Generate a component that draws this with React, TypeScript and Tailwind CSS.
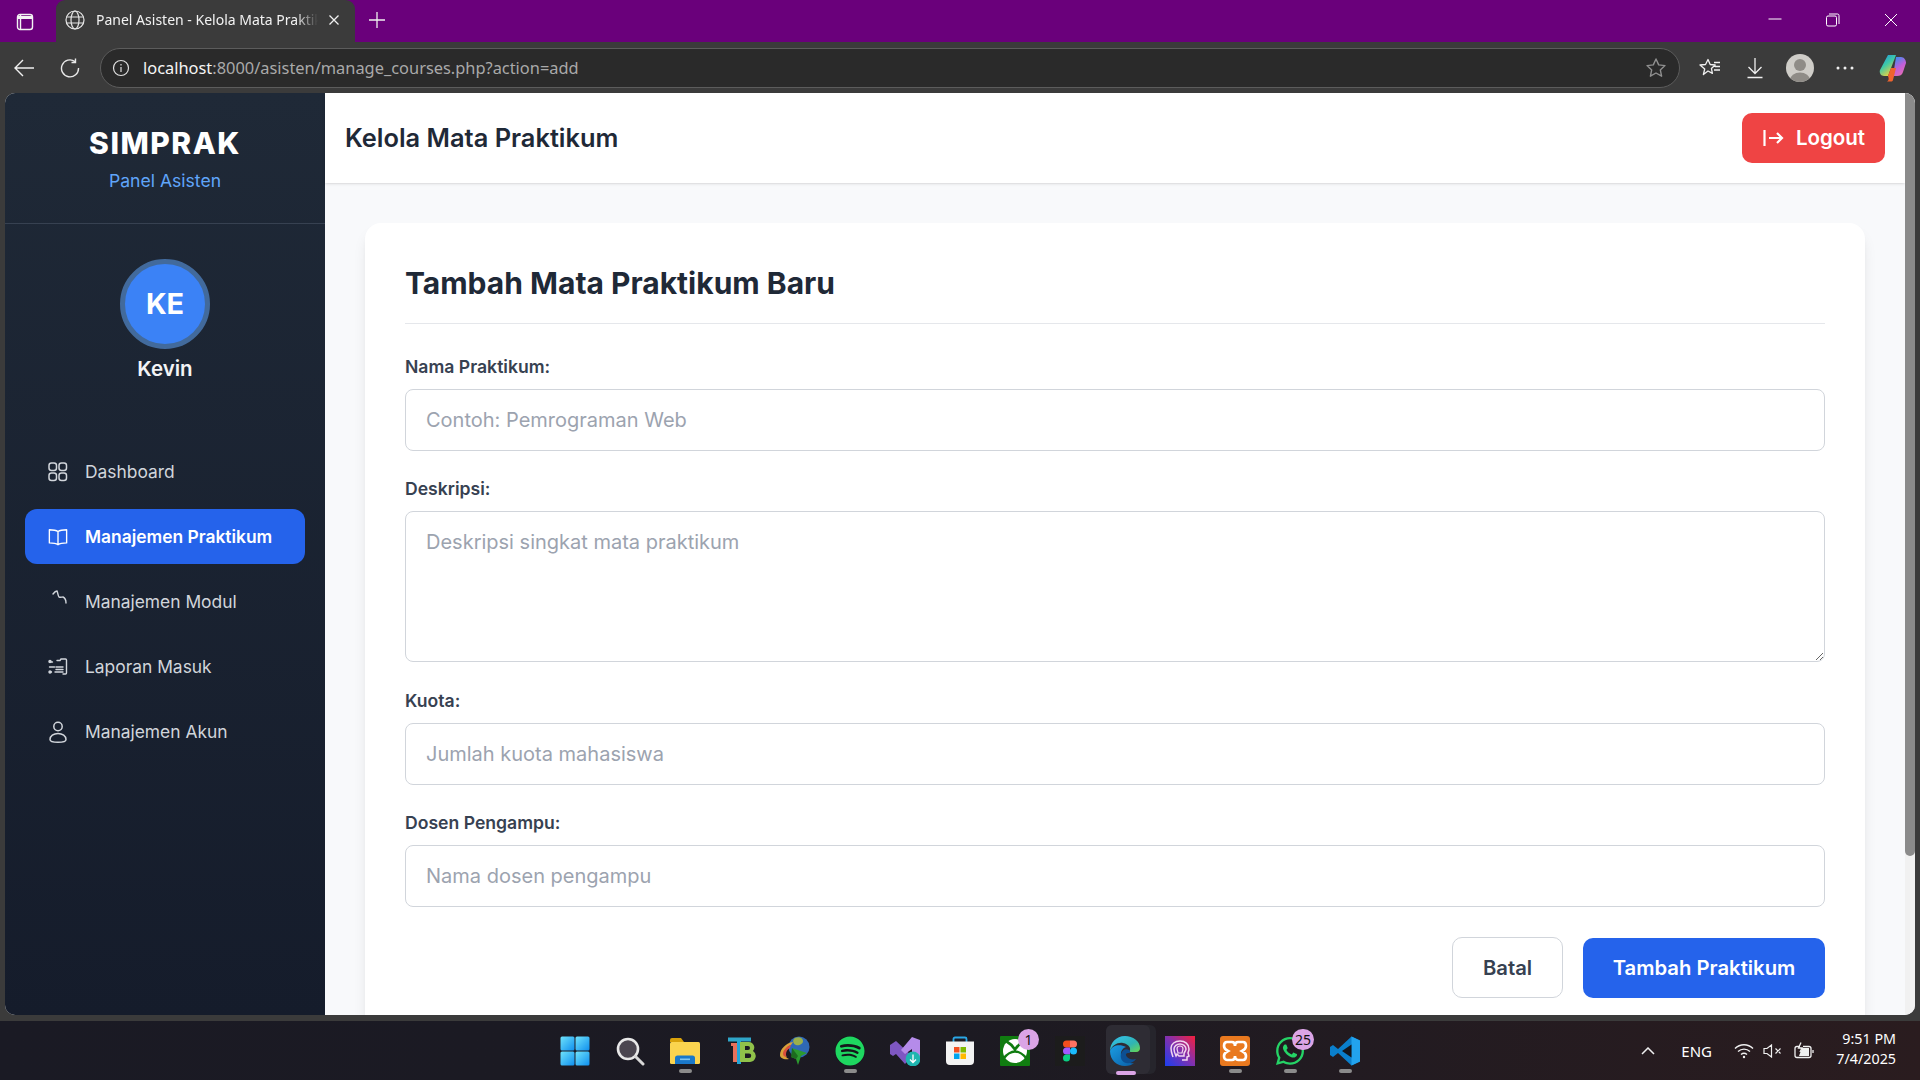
import { FaSpotify, FaWhatsapp } from "react-icons/fa";

const Windows = () => (
  <svg width="30" height="30" viewBox="0 0 30 30">
    <defs>
      <linearGradient id="win" x1="0" y1="0" x2="1" y2="1">
        <stop offset="0" stopColor="#6fe3fb" />
        <stop offset="1" stopColor="#0f8fee" />
      </linearGradient>
    </defs>
    <rect x="0.5" y="0.5" width="14" height="14" rx="1.5" fill="url(#win)" />
    <rect x="15.5" y="0.5" width="14" height="14" rx="1.5" fill="url(#win)" />
    <rect x="0.5" y="15.5" width="14" height="14" rx="1.5" fill="url(#win)" />
    <rect x="15.5" y="15.5" width="14" height="14" rx="1.5" fill="url(#win)" />
  </svg>
);

const Search = () => (
  <svg width="30" height="30" viewBox="0 0 30 30" fill="none">
    <circle cx="13" cy="13" r="10" fill="#4b4650" stroke="#e8e8e8" strokeWidth="2.6" />
    <path d="M20.5 20.5 28 28" stroke="#d8d8d8" strokeWidth="3" strokeLinecap="round" />
  </svg>
);

const Explorer = () => (
  <svg width="30" height="28" viewBox="0 0 30 28">
    <path d="M0 3a2 2 0 0 1 2-2h9l3 4h-14z" fill="#d9a20b" />
    <rect x="0" y="5" width="30" height="22" rx="1.5" fill="#fbd44f" />
    <path d="M5 27v-6a2.5 2.5 0 0 1 2.5-2.5h15a2.5 2.5 0 0 1 2.5 2.5v6z" fill="#1a78c9" />
    <rect x="10" y="21.5" width="10" height="1.6" fill="#7fc4f0" />
  </svg>
);

const TbIcon = () => (
  <svg className="translate-x-[2px]" width="28" height="28" viewBox="0 0 28 28">
    <rect x="0" y="0.500" width="23" height="4" fill="#2fa6c9" />
    <rect x="3" y="6" width="8" height="3" fill="#e8705a" />
    <rect x="5" y="6" width="4" height="19" fill="#e8705a" />
    <rect x="9" y="4" width="4" height="23" fill="#22a5d8" />
    <path d="M12 5h9a5.500 5.500 0 0 1 4 9 6 6 0 0 1-3 11H12zM17 9v4h3a2 2 0 0 0 0-4zM17 16.500V21h4a2.200 2.200 0 0 0 0-4.500z" fill="#90c24a" fillRule="evenodd" />
  </svg>
);

const Idm = () => (
  <svg width="30" height="30" viewBox="0 0 30 30">
    <circle cx="19" cy="11" r="10.500" fill="#2f68b5" />
    <path d="M15 2c4-2 8 0 8 3s-4 5-7 4-4-5-1-7z" fill="#9bb04b" />
    <path d="M0 19C0 13 6 7 13 6l-2 3c-4 1-6 5-6 8 0 3 1 5 4 6-5 1-9-1-9-4z" fill="#d8a13a" />
    <path d="M3 18c0-4 4-8 8-9l-1 3c-2 1-4 3-4 6 0 1 0 2 1 3-2 0-4-1-4-3z" fill="#d94f3c" />
    <path d="M12 12 27 17l-6 3-3 9-2-6-5-2 4-2z" fill="#2c9b2f" />
    <path d="M12 12l6 8-2 3-5-2z" fill="#1d6b1f" />
  </svg>
);

const VsIcon = () => (
  <svg width="30" height="30" viewBox="0 0 30 30">
    <path d="M0 9 6 5l16 15-7 8-9-10-3 2-3-2z" fill="#7e57c2" />
    <path d="M30 4v19l-8 4V13l-7 5-4-4L22 1z" fill="#b58bea" />
    <circle cx="23" cy="23" r="7.400" fill="#1fb5b0" />
    <path d="M23 18.500v8M20 23.500l3 3 3-3" stroke="#fff" strokeWidth="1.300" fill="none" />
  </svg>
);

const Store = () => (
  <svg width="30" height="30" viewBox="0 0 30 30">
    <path d="M8.500 8V3A1.500 1.500 0 0 1 10 1.500h10A1.500 1.500 0 0 1 21.500 3v5" fill="none" stroke="#2aa7e6" strokeWidth="1.800" />
    <path d="M1 5.500h28V25a4 4 0 0 1-4 4H5a4 4 0 0 1-4-4z" fill="#f3f3f3" />
    <rect x="9" y="11" width="5.500" height="5.500" fill="#f25022" />
    <rect x="15.500" y="11" width="5.500" height="5.500" fill="#7fba00" />
    <rect x="9" y="17.500" width="5.500" height="5.500" fill="#00a4ef" />
    <rect x="15.500" y="17.500" width="5.500" height="5.500" fill="#ffb900" />
  </svg>
);

const Xbox = () => (
  <svg width="30" height="30" viewBox="0 0 30 30">
    <rect width="30" height="30" rx="1" fill="#107c10" />
    <circle cx="15" cy="15" r="12" fill="#fff" />
    <path d="M6 5C9.500 7 13 10.500 15 13.500 17 10.500 20.500 7 24 5M3.500 22.500C6.500 18.500 11.500 15.500 15 15.500S23.500 18.500 26.500 22.500" fill="none" stroke="#107c10" strokeWidth="2.600" />
  </svg>
);

const Figma = () => (
  <span className="w-[30px] h-[30px] bg-[#1c1c1c] flex items-center justify-center">
    <svg width="14" height="22" viewBox="0 0 14 21">
      <path d="M3.500 0H7v7H3.500a3.500 3.500 0 0 1 0-7z" fill="#f24e1e" />
      <path d="M7 0h3.500a3.500 3.500 0 0 1 0 7H7z" fill="#ff7262" />
      <path d="M3.500 7H7v7H3.500a3.500 3.500 0 0 1 0-7z" fill="#a259ff" />
      <circle cx="10.500" cy="10.500" r="3.500" fill="#1abcfe" />
      <path d="M3.500 14H7v3.500a3.500 3.500 0 1 1-3.500-3.500z" fill="#0acf83" />
    </svg>
  </span>
);

const Edge = () => (
  <svg width="30" height="30" viewBox="0 0 30 30">
    <defs>
      <linearGradient id="edgeA" x1="0" y1="0" x2="1" y2="1">
        <stop offset="0" stopColor="#35c1f1" />
        <stop offset="0.6" stopColor="#2fb4b4" />
        <stop offset="1" stopColor="#6bd84f" />
      </linearGradient>
      <linearGradient id="edgeB" x1="0" y1="0" x2="1" y2="1">
        <stop offset="0" stopColor="#1b9de2" />
        <stop offset="1" stopColor="#0a5fa8" />
      </linearGradient>
    </defs>
    <path d="M15 0C6 0 0 7 0 15c2-6 8-9 13-8 6 1 9 6 6 9h7c3 0 4-2 4-4C30 5 23 0 15 0z" fill="url(#edgeA)" />
    <path d="M0 15c0 9 7 15 15 15 4 0 7-1 9-3-6 1-12-2-13-8-.6-4 2-7 5-8C10 8 2 9 0 15z" fill="url(#edgeB)" />
    <path d="M11 18c1-4 5-6 8-4 2 1 1 3 0 3-3 0-4 1-2 4 2 2 5 3 9 2-2 3-6 5-10 4-4-1-6-5-5-9z" fill="#0c4f93" />
  </svg>
);

const Proton = () => (
  <svg width="30" height="30" viewBox="0 0 30 30">
    <defs>
      <linearGradient id="pro" x1="0" y1="1" x2="1" y2="0">
        <stop offset="0" stopColor="#1a3ff0" />
        <stop offset="0.55" stopColor="#8a2fa8" />
        <stop offset="1" stopColor="#f5203c" />
      </linearGradient>
    </defs>
    <rect width="30" height="30" fill="url(#pro)" />
    <path d="M8 21c-1-3-2-5-2-9 0-4 4-7 9-7s9 3 9 8c0 2-1 3-1 4l1 3-2 1v3h-5M11 20c-1-2-2-5-2-7 0-3 3-5 6-5s6 2 6 5c0 2-2 3-2 5v2h-5l-2-2z" fill="none" stroke="#f2d6f0" strokeWidth="1.500" />
    <path d="M12 13c0-2 1-3 3-3s3 1 3 3l-1 4h-4z" fill="none" stroke="#f2d6f0" strokeWidth="1.200" />
  </svg>
);

const Xampp = () => (
  <svg width="30" height="30" viewBox="0 0 30 30">
    <rect width="30" height="30" rx="3" fill="#e9791f" />
    <path d="M7 6h5c2 0 3 2 3 4 0-2 1-4 3-4h5c2 0 3 2 3 4s-2 4-4 5c2 1 4 3 4 5s-1 4-3 4h-5c-2 0-3-2-3-4 0 2-1 4-3 4H7c-2 0-3-2-3-4s2-4 4-5c-2-1-4-3-4-5s1-4 3-4z" fill="none" stroke="#fff" strokeWidth="2.600" />
  </svg>
);

const VsCode = () => (
  <svg width="30" height="30" viewBox="0 0 30 30">
    <path d="M21.500 0.500 30 4.500v21l-8.500 4L8 17l-5 4-3-2v-8l3-2 5 4z" fill="#0a7fcc" />
    <path d="M21.500 0.500 30 4.500v21l-8.500 4z" fill="#22a3ee" />
    <path d="M21.500 8.500v13L12 15z" fill="#15161c" />
  </svg>
);

const Copilot = () => (
  <svg width="28" height="28" viewBox="0 0 28 28">
    <defs>
      <linearGradient id="copA" x1="0" y1="0" x2="0.6" y2="1">
        <stop offset="0" stopColor="#1d8fe8" />
        <stop offset="0.5" stopColor="#3ec9a7" />
        <stop offset="1" stopColor="#f3d23a" />
      </linearGradient>
      <linearGradient id="copB" x1="0.3" y1="0" x2="0.8" y2="1">
        <stop offset="0" stopColor="#3f8df0" />
        <stop offset="0.5" stopColor="#c35fd9" />
        <stop offset="1" stopColor="#e96fb0" />
      </linearGradient>
    </defs>
    <path d="M9 1h8L9 22H5C2 22 0 19 1 16z" fill="url(#copA)" />
    <path d="M17 3h5c3 0 5 3 5 6l-3 9c-1 3-3 4-6 4h-4z" fill="url(#copB)" />
    <path d="M9 22l3-8h5l-3 12c-.3 1-1 1.500-2 1.500H8c2-1 2-3 1-5.500z" fill="#f0642e" />
  </svg>
);

const DashboardIcon = () => (
  <svg width="20" height="20" viewBox="0 0 20 20" fill="none" stroke="currentColor" strokeWidth="1.500">
    <rect x="1" y="1" width="7.500" height="7.500" rx="2.500" />
    <rect x="11" y="1" width="7.500" height="7.500" rx="2.500" />
    <rect x="1" y="11" width="7.500" height="7.500" rx="2.500" />
    <rect x="11" y="11" width="7.500" height="7.500" rx="2.500" />
  </svg>
);

const BookIcon = () => (
  <svg width="22" height="20" viewBox="0 0 22 20" fill="none" stroke="currentColor" strokeWidth="1.500" strokeLinejoin="round">
    <path d="M11 4C9 2.500 5.500 2 1.500 2v14.500c4 0 7.500.5 9.500 2 2-1.500 5.500-2 9.500-2V2C16.500 2 13 2.500 11 4zM11 4v14.500" />
  </svg>
);

const ModulIcon = () => (
  <svg className="overflow-visible" width="20" height="20" viewBox="0 0 20 20" fill="none" stroke="currentColor" strokeWidth="1.400" strokeLinecap="round">
    <path d="M5 2C6.500 0 8-1 9-1c1 2 1 5 2 6 1.500.5 3 0 4 0 2 1 3 3 3 6" />
  </svg>
);

const LaporanIcon = () => (
  <svg width="20" height="20" viewBox="0 0 20 20" fill="none" stroke="currentColor" strokeWidth="1.400" strokeLinecap="round">
    <path d="M1.500 5h3M1.500 10h5M1.500 15h2M8 10h7M8 12.500h7M7 15h8M9 3.500h3l1-1.500h4.500a1 1 0 0 1 1 1v13a1 1 0 0 1-1 1H15" />
    <circle cx="2" cy="4.500" r="1" fill="currentColor" />
    <circle cx="2" cy="15" r="1" fill="currentColor" />
  </svg>
);

const PersonIcon = () => (
  <svg width="20" height="24" viewBox="0 0 20 24" fill="none" stroke="currentColor" strokeWidth="1.500">
    <circle cx="10" cy="6.500" r="4.200" />
    <path d="M2 19.500c0-3.500 3.500-6 8-6s8 2.500 8 6c0 2-3.500 2.800-8 2.800s-8-.8-8-2.800z" />
  </svg>
);

type Row = { label: string; icon: React.ReactNode; active?: boolean };

const navRows: Row[] = [
  { label: "Dashboard", icon: <DashboardIcon /> },
  { label: "Manajemen Praktikum", icon: <BookIcon />, active: true },
  { label: "Manajemen Modul", icon: <ModulIcon /> },
  { label: "Laporan Masuk", icon: <LaporanIcon /> },
  { label: "Manajemen Akun", icon: <PersonIcon /> },
];

const TaskIcon = ({ children, run, badge }: { children: React.ReactNode; run?: boolean; badge?: string }) => (
  <div className="w-[55px] h-full flex items-center justify-center relative">
    <div className="relative flex items-center justify-center w-[30px] h-[30px]">
      {children}
      {badge && (
        <span className="absolute -top-[7px] -right-[9px] h-[21px] min-w-[21px] px-[3px] rounded-full bg-[#dba4e6] text-[#111] text-[14px] leading-[21px] text-center">
          {badge}
        </span>
      )}
    </div>
    {run && <span className="absolute left-[21px] bottom-[7px] w-[13px] h-[4px] rounded-full bg-[#8b8b8b]" />}
  </div>
);

const Field = ({ label, placeholder }: { label: string; placeholder: string }) => (
  <div className="mb-[25.400px]">
    <label className="block text-[17.600px] leading-[25px] font-semibold text-[#374151] mb-[10px]">{label}</label>
    <input
      type="text"
      placeholder={placeholder}
      className="block w-full h-[62px] px-[20px] border border-[#d1d5db] rounded-[8px] text-[20px] outline-none placeholder:text-[#9ca3af]"
    />
  </div>
);

export default function App() {
  return (
    <div className="w-screen h-screen overflow-hidden flex flex-col bg-[#3b3b3b] font-['Inter',sans-serif]">
      {/* title bar */}
      <div className="h-[42px] shrink-0 bg-[#6a007b] flex items-end text-white font-['Noto_Sans',sans-serif]">
        <div className="w-[50px] mr-[6px] h-[40px] flex items-center justify-center">
          <svg width="18" height="18" viewBox="0 0 18 18" fill="none" stroke="#f2f2f2" strokeWidth="1.400">
            <rect x="1.500" y="1.500" width="15" height="15" rx="2.500" />
            <path d="M2 4.500h14" strokeWidth="3" />
            <path d="M4.500 2v14" />
          </svg>
        </div>
        <div className="w-[299px] h-[42px] bg-[#3b3b3b] rounded-t-[9px] flex items-center pl-[9px] pr-[12px] pb-[2px]">
          <svg width="20" height="20" viewBox="0 0 20 20" fill="none" stroke="#e6e6e6" strokeWidth="1.200">
            <circle cx="10" cy="10" r="9" />
            <ellipse cx="10" cy="10" rx="4" ry="9" />
            <path d="M1.500 7h17M1.500 13h17" />
          </svg>
          <span className="ml-[11px] w-[222px] overflow-hidden whitespace-nowrap text-[14px] leading-[20px] text-[#f2f2f2] [mask-image:linear-gradient(to_right,black_90%,transparent)]">
            Panel Asisten - Kelola Mata Praktikum
          </span>
          <svg className="ml-[10px]" width="12" height="12" viewBox="0 0 12 12" stroke="#f0f0f0" strokeWidth="1.300">
            <path d="M1.500 1.500l9 9M10.500 1.500l-9 9" />
          </svg>
        </div>
        <div className="w-[44px] h-[42px] flex items-center justify-center pb-[2px]">
          <svg width="18" height="18" viewBox="0 0 18 18" stroke="#f0f0f0" strokeWidth="1.300">
            <path d="M9 1v16M1 9h16" />
          </svg>
        </div>
        <div className="flex-1" />
        <div className="flex h-[42px] items-center pb-[2px]">
          <div className="w-[58px] flex justify-center">
            <svg width="14" height="14" viewBox="0 0 14 14" stroke="#fff" strokeWidth="1">
              <path d="M0.500 6h13" />
            </svg>
          </div>
          <div className="w-[58px] flex justify-center">
            <svg width="14" height="14" viewBox="0 0 14 14" fill="none" stroke="#fff" strokeWidth="1">
              <rect x="0.500" y="3" width="10" height="10" rx="1.500" />
              <path d="M3 1h8.500a1.500 1.500 0 0 1 1.500 1.500V11" />
            </svg>
          </div>
          <div className="w-[58px] flex justify-center">
            <svg width="14" height="14" viewBox="0 0 14 14" stroke="#fff" strokeWidth="1">
              <path d="M1 1l12 12M13 1L1 13" />
            </svg>
          </div>
        </div>
      </div>

      {/* toolbar */}
      <div className="h-[51px] shrink-0 flex items-center bg-[#3b3b3b]">
        <div className="w-[48px] shrink-0 flex justify-center">
          <svg width="22" height="20" viewBox="0 0 22 20" fill="none" stroke="#f0f0f0" strokeWidth="1.400">
            <path d="M21 10H2M10 2l-8 8 8 8" />
          </svg>
        </div>
        <div className="w-[44px] shrink-0 flex justify-center">
          <svg width="20" height="20" viewBox="0 0 20 20" fill="none" stroke="#e8e8e8" strokeWidth="1.400">
            <path d="M15 3.500A8.500 8.500 0 1 0 18.500 10M15.500 0.500v4h-4" />
          </svg>
        </div>
        <div className="ml-[8px] w-[1580px] shrink-0 h-[40px] rounded-full bg-[#2a2a2a] border border-[#5c5c5c] flex items-center pl-[9px] pr-[12px] font-['Noto_Sans',sans-serif]">
          <div className="w-[21px] h-[21px] flex items-center justify-center">
            <svg width="18" height="18" viewBox="0 0 18 18" fill="none" stroke="#e0e0e0" strokeWidth="1.200">
              <circle cx="9" cy="9" r="7.500" />
              <path d="M9 8v5M9 5v1.500" />
            </svg>
          </div>
          <span className="ml-[12px] text-[16.400px] leading-[22px] text-[#f5f5f5]">localhost</span>
          <span className="text-[16.400px] leading-[22px] text-[#a9a9a9]">:8000/asisten/manage_courses.php?action=add</span>
          <div className="flex-1" />
          <svg width="22" height="22" viewBox="0 0 22 22" fill="none" stroke="#8f8f8f" strokeWidth="1.400" strokeLinejoin="round">
            <path d="M11 2l2.700 5.900 6.300.7-4.700 4.300 1.300 6.300L11 16l-5.600 3.200 1.300-6.300L2 8.600l6.300-.7z" />
          </svg>
        </div>
        <div className="w-[60px] shrink-0 flex justify-center">
          <svg width="22" height="20" viewBox="0 0 22 20" fill="none" stroke="#f0f0f0" strokeWidth="1.300" strokeLinejoin="round">
            <path d="M9 1.500l2.200 5 5 .5-3.800 3.400 1 5L9 13l-4.600 3.500 1.300-5.500L1 7l5.500-.5zM15 4.500h6M16 8.500h5M15 12h6" />
          </svg>
        </div>
        <div className="w-[30px] shrink-0 flex justify-center">
          <svg width="18" height="22" viewBox="0 0 18 22" fill="none" stroke="#f0f0f0" strokeWidth="1.300">
            <path d="M9 1v15M2.500 10l6.500 6.500 6.500-6.500M1.500 20.500h15" />
          </svg>
        </div>
        <div className="w-[60px] shrink-0 flex justify-center">
          <span className="w-[28px] h-[28px] rounded-full bg-[#cfcdc8] overflow-hidden flex items-center justify-center">
            <svg width="28" height="28" viewBox="0 0 28 28" fill="#8f8c87">
              <circle cx="14" cy="11" r="6" />
              <ellipse cx="14" cy="26" rx="10" ry="7.500" />
            </svg>
          </span>
        </div>
        <div className="w-[30px] shrink-0 flex justify-center">
          <svg width="18" height="4" viewBox="0 0 18 4" fill="#f0f0f0">
            <circle cx="2" cy="2" r="1.500" />
            <circle cx="9" cy="2" r="1.500" />
            <circle cx="16" cy="2" r="1.500" />
          </svg>
        </div>
        <div className="flex-1 flex justify-end pr-[13px]">
          <Copilot />
        </div>
      </div>

      {/* page */}
      <div className="h-[922px] shrink-0 mx-[5px] rounded-[10px] overflow-hidden flex bg-[#f8f9fb]">
        <aside className="w-[320px] shrink-0 bg-gradient-to-b from-[#1f2937] to-[#151c2b]">
          <div className="h-[131px] border-b border-[#374151] flex flex-col items-center pt-[32px]">
            <div className="text-[30px] leading-[36px] font-extrabold tracking-[1.500px] text-white">SIMPRAK</div>
            <div className="mt-[10px] text-[17.600px] leading-[20px] text-[#60a5fa]">Panel Asisten</div>
          </div>
          <div className="flex flex-col items-center pt-[35px]">
            <div className="w-[90px] h-[90px] rounded-full bg-[#3b82f6] border-[5px] border-[#426a9c] flex items-center justify-center text-[28.800px] font-bold text-white">
              KE
            </div>
            <div className="mt-[5px] text-[20.500px] leading-[30px] font-semibold text-[#f3f4f6]">Kevin</div>
          </div>
          <nav className="mt-[60px] px-[20px] flex flex-col gap-[10px]">
            {navRows.map((r) => (
              <div
                key={r.label}
                className={
                  r.active
                    ? "h-[55px] rounded-[12px] bg-[#2563eb] flex items-center pl-[23px] text-white font-semibold"
                    : "h-[55px] rounded-[12px] flex items-center pl-[23px] text-[#d1d5db]"
                }
              >
                <span className="w-[20px] flex justify-center shrink-0">{r.icon}</span>
                <span className="ml-[17px] text-[17.400px] leading-[24px]">{r.label}</span>
              </div>
            ))}
          </nav>
        </aside>

        <div className="flex-1 min-w-0 flex flex-col">
          <header className="h-[90px] shrink-0 bg-white shadow-sm flex items-center justify-between pl-[20px] pr-[20px]">
            <h1 className="text-[25.400px] font-semibold text-[#1f2937]">Kelola Mata Praktikum</h1>
            <button className="w-[143px] h-[50px] rounded-[10px] bg-[#ef4444] text-white text-[20.500px] font-semibold flex items-center justify-center gap-[12px] pl-[1px]">
              <svg width="21" height="18" viewBox="0 0 21 18" fill="none" stroke="#fff" strokeWidth="2.200">
                <path d="M1.500 1v16M6 9h13M14 4l5 5-5 5" />
              </svg>
              Logout
            </button>
          </header>
          <main className="flex-1 min-h-0 px-[40px] pt-[40px]">
            <div className="bg-white rounded-[16px] shadow-lg p-[40px]">
              <h2 className="text-[30px] leading-[40px] font-bold text-[#1f2937] pb-[20px] border-b border-[#e5e7eb] mb-[30px]">
                Tambah Mata Praktikum Baru
              </h2>
              <Field label="Nama Praktikum:" placeholder="Contoh: Pemrograman Web" />
              <div className="mb-[25.400px]">
                <label className="block text-[17.600px] leading-[25px] font-semibold text-[#374151] mb-[10px]">Deskripsi:</label>
                <textarea
                  placeholder="Deskripsi singkat mata praktikum"
                  className="block w-full h-[151px] px-[20px] py-[15px] border border-[#d1d5db] rounded-[8px] text-[20px] outline-none placeholder:text-[#9ca3af]"
                />
              </div>
              <Field label="Kuota:" placeholder="Jumlah kuota mahasiswa" />
              <Field label="Dosen Pengampu:" placeholder="Nama dosen pengampu" />
              <div className="flex justify-end items-center gap-[20px] mt-[30px]">
                <button className="w-[111px] h-[61px] pt-[1px] rounded-[10px] border border-[#d1d5db] bg-white text-[#374151] text-[20.300px] font-semibold">
                  Batal
                </button>
                <button className="w-[242px] h-[60px] pt-[1px] rounded-[10px] bg-[#2563eb] text-white text-[20.300px] font-semibold">
                  Tambah Praktikum
                </button>
              </div>
            </div>
          </main>
        </div>

        <div className="w-[10px] shrink-0 bg-[#f1f1f1]">
          <div className="h-[763px] rounded-b-[5px] bg-[#8b8b8b]" />
        </div>
      </div>

      {/* taskbar */}
      <div className="mt-[6px] h-[59px] shrink-0 grid grid-cols-[1fr_auto_1fr] bg-gradient-to-r from-[#1a1a24] via-[#1c1a22] to-[#2a1c1f] font-['Noto_Sans',sans-serif] text-white">
        <div />
        <div className="flex h-full">
          <TaskIcon><Windows /></TaskIcon>
          <TaskIcon><Search /></TaskIcon>
          <TaskIcon run><Explorer /></TaskIcon>
          <TaskIcon><TbIcon /></TaskIcon>
          <TaskIcon><Idm /></TaskIcon>
          <TaskIcon run>
            <span className="w-[30px] h-[30px] rounded-full bg-[#15151b] flex items-center justify-center">
              <FaSpotify className="w-[30px] h-[30px] text-[#1ed760]" />
            </span>
          </TaskIcon>
          <TaskIcon><VsIcon /></TaskIcon>
          <TaskIcon><Store /></TaskIcon>
          <TaskIcon badge="1"><Xbox /></TaskIcon>
          <TaskIcon><Figma /></TaskIcon>
          <div className="w-[55px] h-full flex items-center justify-center relative">
            <span className="absolute left-[8px] top-[4px] w-[50px] h-[49px] rounded-[6px] bg-[#26252c]" />
            <span className="absolute left-[8px] top-[4px] w-[44px] h-[49px] rounded-[6px] bg-[#2e2c34]" />
            <span className="relative"><Edge /></span>
            <span className="absolute left-[18px] bottom-[5px] w-[20px] h-[4px] rounded-full bg-[#dba4e6]" />
          </div>
          <TaskIcon><Proton /></TaskIcon>
          <TaskIcon run><Xampp /></TaskIcon>
          <TaskIcon run badge="25">
            <FaWhatsapp className="w-[32px] h-[32px] text-[#25d366]" />
          </TaskIcon>
          <TaskIcon run><VsCode /></TaskIcon>
        </div>
        <div className="flex items-center justify-end pr-[24px]">
          <svg width="14" height="8" viewBox="0 0 14 8" fill="none" stroke="#f0f0f0" strokeWidth="1.500">
            <path d="M1 7l6-6 6 6" />
          </svg>
          <span className="ml-[26px] text-[15px] leading-[18px]">ENG</span>
          <svg className="ml-[22px]" width="20" height="16" viewBox="0 0 20 16" fill="none" stroke="#f0f0f0" strokeWidth="1.400">
            <path d="M1 5.500c5-5 13-5 18 0M4 8.500c3.500-3.200 8.500-3.200 12 0M7 11.500c1.800-1.500 4.200-1.500 6 0" />
            <circle cx="10" cy="14" r="1.200" fill="#f0f0f0" stroke="none" />
          </svg>
          <svg className="ml-[9px]" width="20" height="14" viewBox="0 0 20 14" fill="none" stroke="#f0f0f0" strokeWidth="1.200">
            <path d="M1 4.500h3l4.500-3.500v12L4 9.500H1zM12.500 4.500l5 5M17.500 4.500l-5 5" />
          </svg>
          <svg className="ml-[11px]" width="20" height="18" viewBox="0 0 20 18" fill="none" stroke="#f0f0f0" strokeWidth="1.300">
            <path d="M6 4.500H3a2 2 0 0 0-2 2v7a2 2 0 0 0 2 2h12a2 2 0 0 0 2-2v-7a2 2 0 0 0-2-2H9" />
            <path d="M5 14h10V6H8l-3 8z" fill="#f0f0f0" stroke="none" />
            <path d="M7 0.500 4.500 6H8l-2 4" />
            <path d="M19 8v3" />
          </svg>
          <div className="ml-[20px] w-[62px] -mt-[3px] text-right text-[14.300px] leading-[20px] whitespace-nowrap">
            <div>9:51 PM</div>
            <div>7/4/2025</div>
          </div>
        </div>
      </div>
    </div>
  );
}
